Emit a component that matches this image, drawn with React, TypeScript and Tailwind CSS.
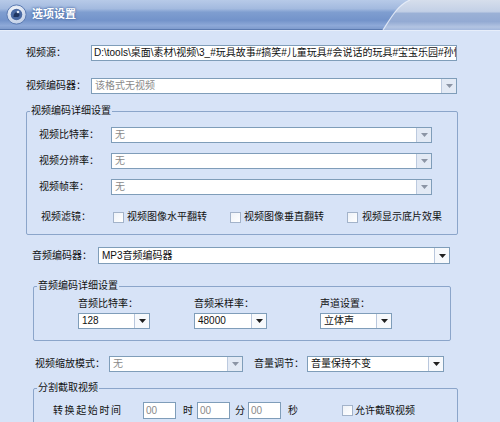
import React from "react";

const FONT = "font-['Liberation_Sans','Noto_Sans_CJK_SC',sans-serif]";

function Arrow({ dark }: { dark?: boolean }) {
  return (
    <div
      className={
        dark
          ? "w-[15px] h-full border-l border-[#b9c7dd] bg-[#f7f9fc] flex items-center justify-center shrink-0"
          : "w-[15px] h-full border-l border-[#bccadf] bg-[#e3eaf5] flex items-center justify-center shrink-0"
      }
    >
      <svg width="7" height="4" viewBox="0 0 7 4">
        <path d="M0 0H7L3.5 4Z" fill={dark ? "#1f1f1f" : "#8c95a5"} />
      </svg>
    </div>
  );
}

function Select({
  w,
  h = "h-[16px]",
  text,
  gray,
  dark,
}: {
  w: string;
  h?: string;
  text: string;
  gray?: boolean;
  dark?: boolean;
}) {
  return (
    <div className={`${w} ${h} flex border border-[#7f9db9] bg-white shrink-0`}>
      <div
        className={`flex-1 pl-[3px] text-[10px] leading-none flex items-center overflow-hidden whitespace-nowrap ${
          gray ? "text-[#8a8a8a]" : "text-[#111]"
        }`}
      >
        {text}
      </div>
      <Arrow dark={dark} />
    </div>
  );
}

function Check() {
  return (
    <div className="w-[11px] h-[11px] border border-[#a3b3ca] bg-gradient-to-br from-[#eef2f8] to-white shrink-0" />
  );
}

function Group({
  title,
  cls,
  children,
}: {
  title: string;
  cls: string;
  children: React.ReactNode;
}) {
  return (
    <div className={`relative border border-[#8ba5ca] rounded-[2px] ${cls}`}>
      <div className="absolute left-[3px] top-[-7px] px-[1px] bg-[#d7e3f7] text-[10px] leading-[12px] text-[#111]">
        {title}
      </div>
      {children}
    </div>
  );
}

export default function App() {
  return (
    <div className={`w-[500px] h-[422px] overflow-hidden bg-[#d7e3f7] text-[#111] ${FONT}`}>
      {/* Title bar */}
      <div className="relative h-[30px] bg-[linear-gradient(to_bottom,#b7cae8_0%,#a3badf_30%,#7f9ed0_42%,#7393ca_70%,#8ea9d8_88%,#7e9bcd_100%)] border-b border-[#5b7ab0]">
        <svg className="absolute right-0 top-0" width="120" height="30" viewBox="0 0 120 30">
          <defs>
            <linearGradient id="sw" x1="0" y1="0" x2="0" y2="1">
              <stop offset="0" stopColor="#d6deec" />
              <stop offset="0.38" stopColor="#c3d0e6" />
              <stop offset="0.45" stopColor="#9bb1d6" />
              <stop offset="0.72" stopColor="#93aad3" />
              <stop offset="0.9" stopColor="#b3c4e2" />
              <stop offset="1" stopColor="#a2b7dc" />
            </linearGradient>
          </defs>
          <path d="M3 30C12 16 18 5 30 0H120V30Z" fill="url(#sw)" />
          <path d="M3 30C12 16 18 5 30 0" fill="none" stroke="#eef3fb" strokeWidth="1.2" opacity="0.8" />
        </svg>
        <div className="relative flex items-center h-full pl-[6px]">
          <svg width="21" height="21" viewBox="0 0 21 21">
            <defs>
              <radialGradient id="ic" cx="0.45" cy="0.35" r="0.7">
                <stop offset="0" stopColor="#ffffff" />
                <stop offset="1" stopColor="#b9c9e4" />
              </radialGradient>
            </defs>
            <circle cx="10.5" cy="10.5" r="9.6" fill="url(#ic)" stroke="#5d7cb3" strokeWidth="1" />
            <circle cx="10.5" cy="10.5" r="5.8" fill="#4a6aa3" />
            <path d="M7.5 12.5c0-2.5 1.5-4.3 3.3-4.3 1.5 0 2.7 1.1 2.7 2.6 0 1.3-.8 2.1-1.8 2.1H7.5Z" fill="#1f3560" />
            <circle cx="12" cy="8" r="1.3" fill="#dfe8f6" />
          </svg>
          <span className="ml-[5px] text-[11px] font-bold text-white leading-none [text-shadow:0_0_2px_#4c6ea8,0_0_3px_#4c6ea8]">
            选项设置
          </span>
        </div>
      </div>
      <div className="h-[1px] bg-[#e7eefa]" />

      {/* 视频源 */}
      <div className="mt-[14px] pl-[26px] flex items-center h-[16px]">
        <div className="w-[65px] text-[10px] leading-none">视频源：</div>
        <div className="w-[366px] h-[16px] border border-[#7f9db9] bg-white flex items-center pl-[2px] overflow-hidden whitespace-nowrap text-[10px] leading-none text-[#111]">
          D:\tools\桌面\素材\视频\3_#玩具故事#搞笑#儿童玩具#会说话的玩具#宝宝乐园#孙悟空
        </div>
      </div>

      {/* 视频编码器 */}
      <div className="mt-[17px] pl-[26px] flex items-center h-[16px]">
        <div className="w-[65px] text-[10px] leading-none">视频编码器：</div>
        <Select w="w-[366px]" text="该格式无视频" gray />
      </div>

      {/* 视频编码详细设置 */}
      <Group title="视频编码详细设置" cls="mt-[17px] ml-[26px] w-[432px] h-[124px]">
        <div className="pt-[15px] pl-[12px] flex flex-col gap-[10px]">
          <div className="flex items-center h-[16px]">
            <div className="w-[72px] text-[10px] leading-none">视频比特率：</div>
            <Select w="w-[321px]" text="无" gray />
          </div>
          <div className="flex items-center h-[16px]">
            <div className="w-[72px] text-[10px] leading-none">视频分辨率：</div>
            <Select w="w-[321px]" text="无" gray />
          </div>
          <div className="flex items-center h-[16px]">
            <div className="w-[72px] text-[10px] leading-none">视频帧率：</div>
            <Select w="w-[321px]" text="无" gray />
          </div>
        </div>
        <div className="mt-[16px] pl-[14px] flex items-center h-[12px] text-[10px] leading-none">
          <div className="w-[72px]">视频滤镜：</div>
          <div className="w-[117px] flex items-center gap-[3px]">
            <Check />
            <span>视频图像水平翻转</span>
          </div>
          <div className="w-[117px] flex items-center gap-[3px]">
            <Check />
            <span>视频图像垂直翻转</span>
          </div>
          <div className="flex items-center gap-[4px]">
            <Check />
            <span>视频显示底片效果</span>
          </div>
        </div>
      </Group>

      {/* 音频编码器 */}
      <div className="mt-[12px] pl-[32px] flex items-center h-[17px]">
        <div className="w-[66px] text-[10px] leading-none">音频编码器：</div>
        <Select w="w-[352px]" h="h-[17px]" text="MP3音频编码器" dark />
      </div>

      {/* 音频编码详细设置 */}
      <Group title="音频编码详细设置" cls="mt-[22px] ml-[33px] w-[418px] h-[55px]">
        <div className="pt-[11px] pl-[44px] flex">
          <div className="w-[116px]">
            <div className="h-[12px] text-[10px] leading-[12px] mb-[3px]">音频比特率：</div>
            <Select w="w-[72px]" text="128" dark />
          </div>
          <div className="w-[126px]">
            <div className="h-[12px] text-[10px] leading-[12px] mb-[3px]">音频采样率：</div>
            <Select w="w-[73px]" text="48000" dark />
          </div>
          <div>
            <div className="h-[12px] text-[10px] leading-[12px] mb-[3px]">声道设置：</div>
            <Select w="w-[72px]" text="立体声" dark />
          </div>
        </div>
      </Group>

      {/* 缩放 / 音量 */}
      <div className="mt-[15px] pl-[35px] flex items-center h-[16px] text-[10px] leading-none">
        <div className="w-[74px]">视频缩放模式：</div>
        <Select w="w-[134px]" text="无" gray />
        <div className="ml-[11px] w-[53px]">音量调节：</div>
        <Select w="w-[137px]" text="音量保持不变" dark />
      </div>

      {/* 分割截取视频 */}
      <Group title="分割截取视频" cls="mt-[16px] ml-[33px] w-[425px] h-[60px]">
        <div className="pt-[13px] pl-[19px] flex items-center h-[30px] text-[10px] leading-none">
          <div className="w-[90px] tracking-[1.6px]">转换起始时间</div>
          <div className="w-[33px] h-[17px] border border-[#7f9db9] bg-white flex items-center pl-[2px] text-[#8a8a8a]">00</div>
          <div className="ml-[7px] w-[10px]">时</div>
          <div className="ml-[4px] w-[33px] h-[17px] border border-[#7f9db9] bg-white flex items-center pl-[2px] text-[#8a8a8a]">00</div>
          <div className="ml-[5px] w-[10px]">分</div>
          <div className="ml-[3px] w-[33px] h-[17px] border border-[#7f9db9] bg-white flex items-center pl-[2px] text-[#8a8a8a]">00</div>
          <div className="ml-[7px] w-[10px]">秒</div>
          <div className="ml-[44px] flex items-center gap-[2px]">
            <Check />
            <span>允许截取视频</span>
          </div>
        </div>
      </Group>
    </div>
  );
}
